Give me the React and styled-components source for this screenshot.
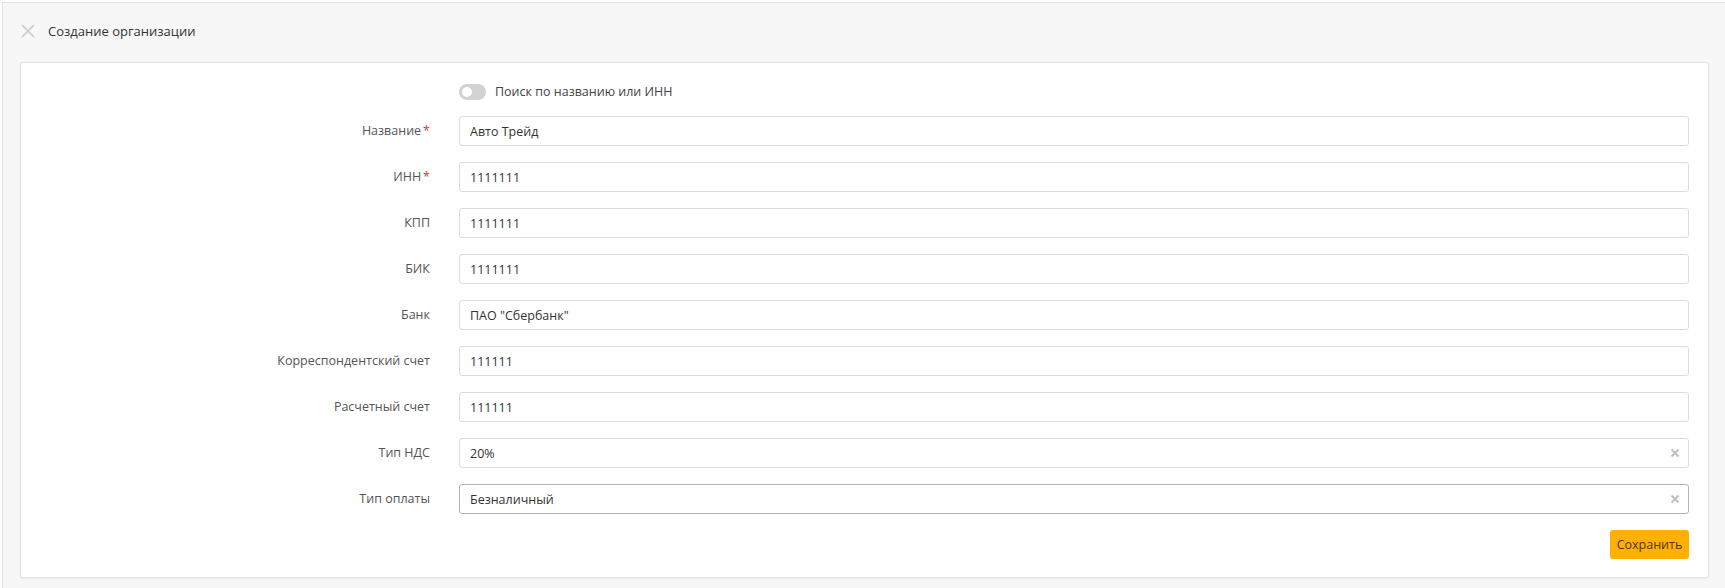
import React from 'react';
import styled, { createGlobalStyle } from 'styled-components';

const GlobalStyle = createGlobalStyle`
  html, body {
    margin: 0;
    padding: 0;
    background: #fff;
  }
  body {
    font-family: 'Open Sans', 'Noto Sans', sans-serif;
    font-size: 13px;
    color: #333;
  }
  * {
    box-sizing: border-box;
  }
`;

const Frame = styled.div`
  margin: 2px 0 0 2px;
  height: 586px;
  background: #f7f7f7;
  border-top: 1px solid #e4e4e4;
  border-left: 1px solid #e4e4e4;
  display: flex;
  flex-direction: column;
`;

const Header = styled.div`
  height: 59px;
  display: flex;
  align-items: center;
  padding-left: 18px;
  gap: 13px;
  padding-bottom: 3px;
`;

const CloseButton = styled.button`
  width: 14px;
  height: 14px;
  padding: 0;
  border: none;
  background: none;
  display: flex;
  cursor: pointer;
`;

const Title = styled.h1`
  margin: 0;
  font-size: 13px;
  font-weight: 400;
  color: #333;
`;

const Card = styled.div`
  margin: 0 16px 0 17px;
  background: #fff;
  border: 1px solid #e3e3e3;
  border-radius: 3px;
  box-shadow: 0 1px 3px rgba(0, 0, 0, 0.06);
  padding: 20px 19px 18px 0;
`;

const Form = styled.div`
  display: grid;
  grid-template-columns: 409px 1fr;
  column-gap: 29px;
  row-gap: 16px;
  align-items: center;
`;

const Label = styled.label`
  text-align: right;
  color: #555;
  font-size: 12.5px;
  white-space: nowrap;
  margin-bottom: 1px;
  span {
    color: #e53935;
    margin-left: 2px;
  }
`;

const ToggleRow = styled.div`
  grid-column: 2;
  display: flex;
  align-items: center;
  gap: 9px;
  height: 17px;
  color: #444;
  font-size: 12.5px;
`;

const Switch = styled.div`
  width: 27px;
  height: 16px;
  border-radius: 8px;
  background: #d2d2d2;
  position: relative;
  &::after {
    content: '';
    position: absolute;
    left: 3px;
    top: 3px;
    width: 10px;
    height: 10px;
    border-radius: 50%;
    background: #fff;
  }
`;

const InputBox = styled.div`
  height: 30px;
  border: 1px solid ${(p) => (p.$focused ? '#b3b3b3' : '#dcdcdc')};
  border-radius: 3px;
  display: flex;
  align-items: center;
  padding: 0 8px 0 10px;
  background: #fff;
`;

const Input = styled.input`
  flex: 1;
  border: none;
  outline: none;
  padding: 0;
  font-family: inherit;
  font-size: 12.5px;
  color: #333;
  background: transparent;
`;

const Clear = styled.span`
  display: flex;
  width: 10px;
  height: 10px;
`;

const Actions = styled.div`
  grid-column: 2;
  display: flex;
  justify-content: flex-end;
`;

const SaveButton = styled.button`
  height: 29px;
  width: 79px;
  border: none;
  border-radius: 3px;
  background: #ffb000;
  color: #4a3800;
  font-family: inherit;
  font-size: 12.5px;
  cursor: pointer;
`;

const fields = [
  { label: 'Название', value: 'Авто Трейд', required: true },
  { label: 'ИНН', value: '1111111', required: true },
  { label: 'КПП', value: '1111111' },
  { label: 'БИК', value: '1111111' },
  { label: 'Банк', value: 'ПАО "Сбербанк"' },
  { label: 'Корреспондентский счет', value: '111111' },
  { label: 'Расчетный счет', value: '111111' },
  { label: 'Тип НДС', value: '20%', clearable: true },
  { label: 'Тип оплаты', value: 'Безналичный', clearable: true, focused: true },
];

export default function App() {
  return (
    <>
      <GlobalStyle />
      <Frame>
        <Header>
          <CloseButton type="button">
            <svg width="14" height="14" viewBox="0 0 14 14">
              <path d="M1 1L13 13M13 1L1 13" stroke="#c8c8c8" strokeWidth="1.5" />
            </svg>
          </CloseButton>
          <Title>Создание организации</Title>
        </Header>
        <Card>
          <Form>
            <ToggleRow>
              <Switch />
              Поиск по названию или ИНН
            </ToggleRow>
            {fields.map((f) => (
              <React.Fragment key={f.label}>
                <Label>
                  {f.label}
                  {f.required && <span>*</span>}
                </Label>
                <InputBox $focused={f.focused}>
                  <Input defaultValue={f.value} />
                  {f.clearable && (
                    <Clear>
                      <svg width="10" height="10" viewBox="0 0 10 10">
                        <path d="M1.5 1.5L8.5 8.5M8.5 1.5L1.5 8.5" stroke="#bdbdbd" strokeWidth="1.8" />
                      </svg>
                    </Clear>
                  )}
                </InputBox>
              </React.Fragment>
            ))}
            <Actions>
              <SaveButton type="button">Сохранить</SaveButton>
            </Actions>
          </Form>
        </Card>
      </Frame>
    </>
  );
}
